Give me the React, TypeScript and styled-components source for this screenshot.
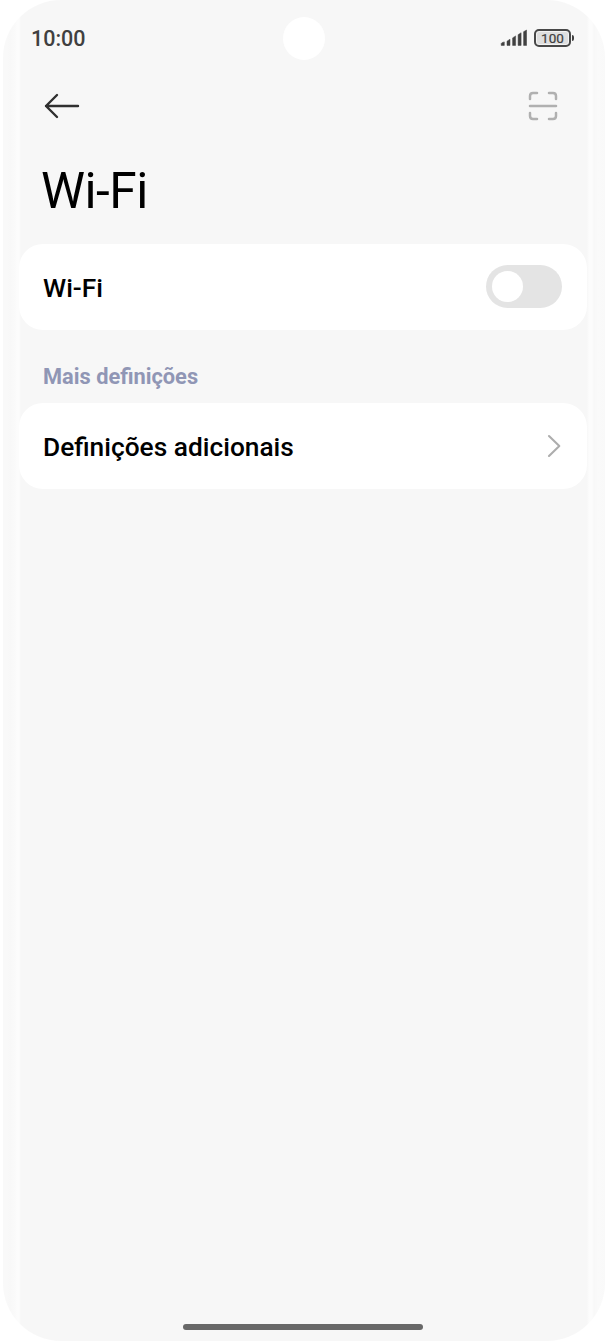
import React from "react";
import styled, { createGlobalStyle } from "styled-components";

const GlobalStyle = createGlobalStyle`
  *, *::before, *::after { box-sizing: border-box; }
  body { margin: 0; background: #ffffff; font-family: Roboto, "Liberation Sans", sans-serif; -webkit-font-smoothing: antialiased; }
`;

const Phone = styled.main`
  position: relative;
  display: flex;
  flex-direction: column;
  width: 602px;
  height: 1341px;
  margin: 0 0 1px 3px;
  border-radius: 58px;
  overflow: hidden;
  background: linear-gradient(
    to right,
    #f9f9f9 0, #f9f9f9 5px, #f8f8f8 7px, #fafafa 12px, #fcfcfc 14px, #fcfcfc 16px, #f7f7f7 18px,
    #f7f7f7 584px, #fcfcfc 586px, #fcfcfc 589px, #f8f8f8 591px, #fafafa 595px, #f9f9f9 602px
  );
`;

const StatusBar = styled.header`
  display: flex;
  align-items: center;
  justify-content: space-between;
  height: 76px;
  padding: 0 31px 0 28px;
`;

const Clock = styled.span`
  font-size: 21.5px;
  font-weight: 500;
  line-height: 26px;
  color: #404040;
  padding-top: 2px;
`;

const Camera = styled.div`
  position: absolute;
  top: 17px;
  left: 280px;
  width: 42px;
  height: 43px;
  border-radius: 50%;
  background: #ffffff;
`;

const StatusIcons = styled.div`
  display: flex;
  align-items: center;
  gap: 7px;
`;

const Battery = styled.div`
  display: flex;
  align-items: center;
  gap: 1px;
`;

const BatteryBody = styled.div`
  display: flex;
  align-items: center;
  justify-content: center;
  width: 37px;
  height: 18px;
  border: 2px solid #484848;
  border-radius: 5px;
  background: #dfdfdf;
  box-shadow: inset 0 0 0 1px #f3f3f3;
  color: #404040;
  font-size: 13.5px;
  font-weight: 400;
  line-height: 14px;
  letter-spacing: 0.1px;
  -webkit-text-stroke: 0.2px #404040;
`;

const BatteryTip = styled.div`
  width: 2px;
  height: 6px;
  border-radius: 0 2px 2px 0;
  background: #414141;
`;

const Toolbar = styled.nav`
  display: flex;
  align-items: center;
  justify-content: space-between;
  height: 60px;
  padding: 0 46px 0 40px;
`;

const IconButton = styled.button`
  display: flex;
  padding: 0;
  border: 0;
  background: none;
`;

const Title = styled.h1`
  margin: 24px 0 0 38px;
  height: 59px;
  font-size: 49.6px;
  font-weight: 400;
  line-height: 62px;
  letter-spacing: -0.5px;
  color: #000000;
`;

const Card = styled.section<{ $top: number }>`
  display: flex;
  align-items: center;
  justify-content: space-between;
  flex: none;
  height: 86px;
  margin: ${({ $top }) => $top}px 18px 0 16px;
  padding: 0 25px 0 24px;
  border-radius: 24px;
  background: #ffffff;
`;

const Label = styled.span`
  padding-top: 2px;
  font-size: 26.3px;
  font-weight: 500;
  line-height: 32px;
  color: #000000;
`;

const Switch = styled.button`
  display: flex;
  align-items: center;
  width: 76px;
  height: 43px;
  margin-bottom: 1px;
  padding: 0 6px;
  border: 0;
  border-radius: 22px;
  background: #e4e4e4;
`;

const Knob = styled.span`
  width: 31px;
  height: 31px;
  border-radius: 50%;
  background: #ffffff;
`;

const SectionTitle = styled.h2`
  margin: 33px 0 0 40px;
  height: 28px;
  font-size: 21.8px;
  font-weight: 700;
  line-height: 28px;
  color: #9096b5;
`;

const HomeIndicator = styled.div`
  width: 240px;
  height: 6px;
  margin: auto auto 11px 179.5px;
  border-radius: 3px;
  background: #686868;
`;

const App: React.FC = () => (
  <>
    <GlobalStyle />
    <Phone>
      <Camera />
      <StatusBar>
        <Clock>10:00</Clock>
        <StatusIcons>
          <svg width="27" height="18" viewBox="0 0 27 18" fill="none" stroke="#414141" strokeWidth="3" strokeLinejoin="round">
            <path
              d="M1.2 14.5Q1.2 13.6 4.3 12.9V16.4H1.2ZM7 12.2L10 10.2V16.4H7ZM12.6 8.9L15.6 6.9V16.4H12.6ZM18.1 5.7L21.1 3.7V16.4H18.1ZM23.6 2.7L26.6 1V16.4H23.6Z"
              fill="#414141"
              strokeWidth="0.5"
            />
          </svg>
          <Battery>
            <BatteryBody>100</BatteryBody>
            <BatteryTip />
          </Battery>
        </StatusIcons>
      </StatusBar>
      <Toolbar>
        <IconButton aria-label="Voltar">
          <svg width="37" height="26" viewBox="0 0 37 26" fill="none" stroke="#303030" strokeWidth="2.4" strokeLinecap="round" strokeLinejoin="round">
            <path d="M35 13H3M14 2L3 13L14 24" />
          </svg>
        </IconButton>
        <IconButton aria-label="Ler código">
          <svg width="32" height="32" viewBox="0 0 32 32" fill="none" stroke="#b0b0b0" strokeWidth="2.5" strokeLinecap="round">
            <path d="M3 9V6Q3 3 6 3H10M22 3H26Q29 3 29 6V9M29 23V26Q29 29 26 29H22M10 29H6Q3 29 3 26V23M3 16H29" />
          </svg>
        </IconButton>
      </Toolbar>
      <Title>Wi-Fi</Title>
      <Card $top={25}>
        <Label>Wi-Fi</Label>
        <Switch role="switch" aria-checked={false} aria-label="Wi-Fi">
          <Knob />
        </Switch>
      </Card>
      <SectionTitle>Mais definições</SectionTitle>
      <Card $top={12}>
        <Label>Definições adicionais</Label>
        <svg width="16" height="24" viewBox="0 0 16 24" fill="none" stroke="#adadad" strokeWidth="2.1" strokeLinecap="round" strokeLinejoin="round">
          <path d="M3 2L13.3 12L3 22" />
        </svg>
      </Card>
      <HomeIndicator />
    </Phone>
  </>
);

export default App;
